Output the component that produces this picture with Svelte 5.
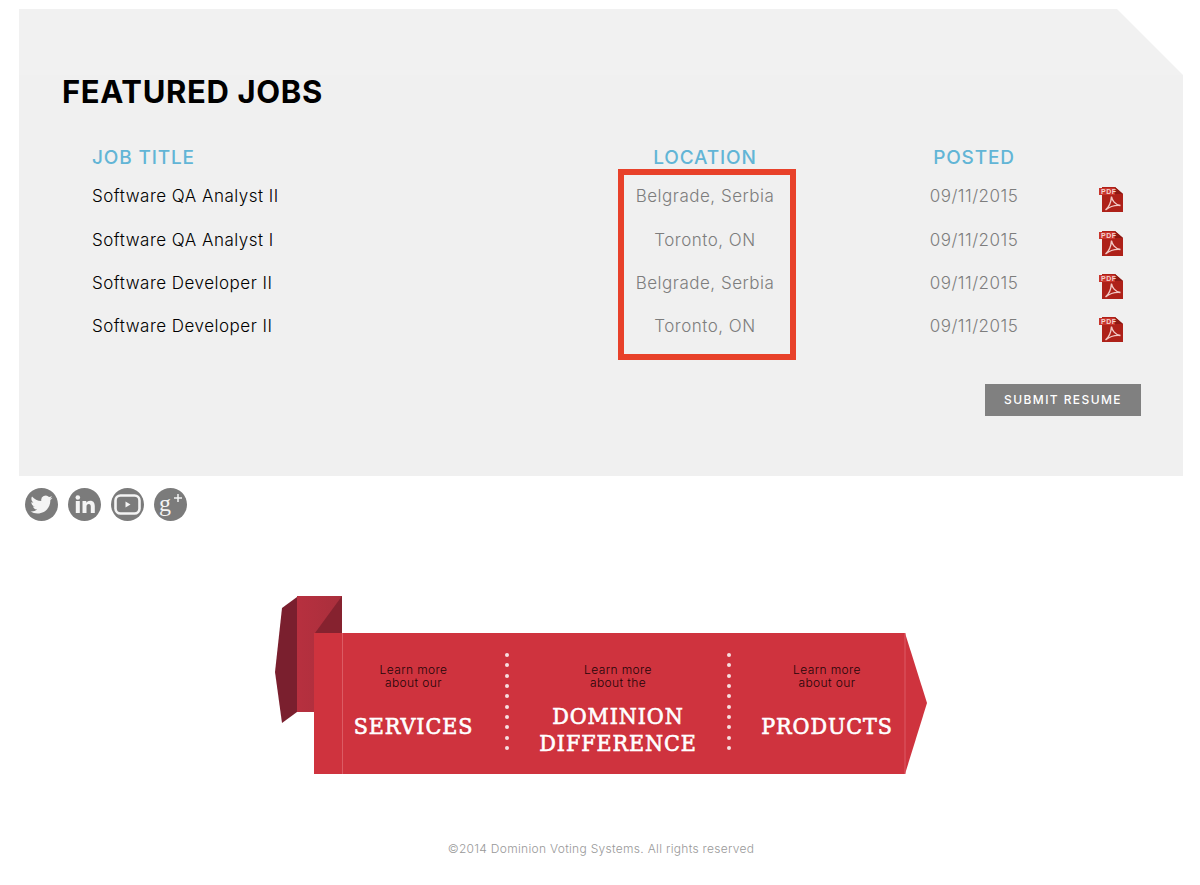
<script>
  const jobs = [
    { title: 'Software QA Analyst II', location: 'Belgrade, Serbia', posted: '09/11/2015' },
    { title: 'Software QA Analyst I', location: 'Toronto, ON', posted: '09/11/2015' },
    { title: 'Software Developer II', location: 'Belgrade, Serbia', posted: '09/11/2015' },
    { title: 'Software Developer II', location: 'Toronto, ON', posted: '09/11/2015' }
  ];
  const dots = Array(10);
</script>

<main class="page">
  <section class="panel">
    <h1>FEATURED JOBS</h1>
    <div class="jobs">
      <div class="head">JOB TITLE</div>
      <div class="head center">LOCATION</div>
      <div class="head center posted">POSTED</div>
      <div></div>
      {#each jobs as job}
        <div class="cell title">{job.title}</div>
        <div class="cell center muted">{job.location}</div>
        <div class="cell center muted posted">{job.posted}</div>
        <div class="cell pdf">
          <svg width="25" height="27" viewBox="0 0 25 27">
            <path d="M3 1h13l8 7v18H3z" fill="#ae2119" />
            <path d="M16 1l8 7h-8z" fill="#8c1a14" />
            <path d="M0 2h16v7H0z" fill="#c9352c" />
            <text x="2" y="8" class="pdf-label">PDF</text>
            <path d="M6.500 24c3-2.500 5.500-7 6-13.500 .5 3.500 3.500 8.500 9 9-4.500-.5-10 .5-15 4.500z" fill="none" stroke="#f2c9c5" stroke-width="1.400" />
          </svg>
        </div>
      {/each}
    </div>
    <div class="actions"><button>SUBMIT RESUME</button></div>
    <div class="highlight"></div>
  </section>

  <div class="social">
    <svg viewBox="0 0 33 33"><circle cx="16.500" cy="16.500" r="16.500" fill="#7b7b7b" /><path transform="translate(5.500 5.500) scale(.92)" fill="#f4f4f4" d="M23.953 4.570a10 10 0 01-2.825.775 4.958 4.958 0 002.163-2.723c-.951.555-2.005.959-3.127 1.184a4.920 4.920 0 00-8.384 4.482C7.690 8.095 4.067 6.130 1.640 3.162a4.822 4.822 0 00-.666 2.475c0 1.710.870 3.213 2.188 4.096a4.904 4.904 0 01-2.228-.616v.060a4.923 4.923 0 003.946 4.827 4.996 4.996 0 01-2.212.085 4.936 4.936 0 004.604 3.417 9.867 9.867 0 01-6.102 2.105c-.390 0-.779-.023-1.170-.067a13.995 13.995 0 007.557 2.209c9.053 0 13.998-7.496 13.998-13.985 0-.210 0-.420-.015-.630A9.935 9.935 0 0024 4.590z" /></svg>
    <svg viewBox="0 0 33 33"><circle cx="16.500" cy="16.500" r="16.500" fill="#7b7b7b" /><g fill="#f4f4f4"><circle cx="9.800" cy="9.500" r="2.300" /><rect x="7.800" y="13" width="4" height="12" /><path d="M14.500 13h3.800v1.800c.8-1.300 2.200-2.100 3.900-2.100 3.200 0 4.600 2.100 4.600 5.400V25h-4v-6.300c0-1.600-.6-2.700-2-2.700-1.500 0-2.300 1.100-2.300 2.700V25h-4z" /></g></svg>
    <svg viewBox="0 0 33 33"><circle cx="16.500" cy="16.500" r="16.500" fill="#7b7b7b" /><rect x="4.500" y="7.500" width="24" height="18" rx="5" fill="none" stroke="#f4f4f4" stroke-width="2.600" /><path d="M14.500 13.500l5 3-5 3z" fill="#f4f4f4" /></svg>
    <svg viewBox="0 0 33 33"><circle cx="16.500" cy="16.500" r="16.500" fill="#7b7b7b" /><text x="5" y="23" class="gplus">g</text><path d="M24 6v8M20 10h8" stroke="#f4f4f4" stroke-width="1.500" /></svg>
  </div>

  <nav class="banner">
    <svg class="ribbon" width="653" height="178" viewBox="0 0 653 178">
      <defs>
        <linearGradient id="fold" x1="0" x2="1" y1="0" y2="0">
          <stop offset="0" stop-color="#b7303f" />
          <stop offset="1" stop-color="#a92f3c" />
        </linearGradient>
      </defs>
      <path d="M7 12L22 1V116L7 127L0 76z" fill="#7a1f2e" />
      <path d="M22 0H67V37H39V116H22z" fill="url(#fold)" />
      <path d="M67 0V37H40z" fill="#86222f" />
      <path d="M39 37H630L652 107L630 178H39z" fill="#cf333e" />
      <path d="M67.500 37V178M630 37V178" stroke="#dc5b64" stroke-width="1" />
    </svg>
    <div class="item first">
      <p>Learn more<br />about our</p>
      <div class="name">SERVICES</div>
    </div>
    <div class="dots">{#each dots as _}<span></span>{/each}</div>
    <div class="item second">
      <p>Learn more<br />about the</p>
      <div class="name">DOMINION<br />DIFFERENCE</div>
    </div>
    <div class="dots">{#each dots as _}<span></span>{/each}</div>
    <div class="item third">
      <p>Learn more<br />about our</p>
      <div class="name">PRODUCTS</div>
    </div>
  </nav>

  <footer>©2014 Dominion Voting Systems. All rights reserved</footer>
</main>

<style>
  :global(body) {
    background: #fff;
  }

  .page {
    font-family: Inter, "Liberation Sans", sans-serif;
    padding-top: 9px;
    height: 876px;
    overflow: hidden;
  }

  .panel {
    position: relative;
    box-sizing: border-box;
    margin-left: 19px;
    width: 1164px;
    height: 467px;
    padding: 65px 0 0 43px;
    background: linear-gradient(#f1f1f1 66px, #f0f0f0 66px);
    clip-path: polygon(0 0, 1098px 0, 1164px 66px, 1164px 467px, 0 467px);
  }

  h1 {
    margin: 0;
    font-size: 31px;
    line-height: 36px;
    font-weight: 700;
    color: #000;
    letter-spacing: 0.65px;
  }

  .jobs {
    display: grid;
    grid-template-columns: 528px 170px 278px 56px;
    grid-auto-rows: 43.300px;
    margin: 29px 0 0 30px;
  }

  .head {
    height: 30px;
    font-size: 19px;
    line-height: 38px;
    font-weight: 500;
    letter-spacing: 0.85px;
    color: #62b5d6;
  }

  .center {
    text-align: center;
  }

  .posted {
    padding-left: 90px;
  }

  .cell {
    font-size: 17px;
    font-weight: 300;
    line-height: 30px;
    margin-top: -1px;
    letter-spacing: 0.5px;
  }

  .title {
    color: #000;
    letter-spacing: 0.5px;
  }

  .muted {
    color: #7d7d7d;
  }

  .pdf {
    padding-left: 31px;
    padding-top: 5px;
  }

  .pdf-label {
    font: 700 7px "Liberation Sans", sans-serif;
    fill: #f3d2ce;
  }

  .actions {
    display: flex;
    justify-content: flex-end;
    margin: 29px 42px 0 0;
  }

  button {
    width: 156px;
    height: 32px;
    padding: 0 0 2px;
    border: 0;
    background: #808080;
    color: #fff;
    font: 500 12px Inter, "Liberation Sans", sans-serif;
    letter-spacing: 1.400px;
  }

  .highlight {
    position: absolute;
    left: 599px;
    top: 160px;
    box-sizing: border-box;
    width: 178px;
    height: 191px;
    border: 6px solid #e8412a;
  }

  .social {
    display: flex;
    gap: 10px;
    margin: 12px 0 0 25px;
  }

  .social svg {
    width: 33px;
    height: 33px;
  }

  .gplus {
    font: 400 24px "Liberation Serif", serif;
    fill: #f4f4f4;
  }

  .banner {
    position: relative;
    display: flex;
    box-sizing: border-box;
    margin: 75px 0 0 275px;
    width: 653px;
    height: 178px;
    padding: 37px 0 0 47px;
  }

  .ribbon {
    position: absolute;
    left: 0;
    top: 0;
  }

  .item {
    position: relative;
    display: flex;
    flex-direction: column;
    box-sizing: border-box;
    height: 141px;
    padding: 30px 0 4px;
    text-align: center;
  }

  .first { width: 183px; padding-bottom: 11px; }
  .second { width: 218px; }
  .third { width: 192px; padding-bottom: 11px; }

  .item p {
    margin: 0;
    font-size: 12px;
    font-weight: 300;
    line-height: 13px;
    letter-spacing: 0.4px;
    color: #1d0508;
  }

  .name {
    flex: 1;
    display: flex;
    align-items: center;
    justify-content: center;
    font-family: "DejaVu Serif", serif;
    font-stretch: condensed;
    font-size: 23px;
    line-height: 27px;
    font-weight: 400;
    letter-spacing: 0.9px;
    -webkit-text-stroke: 0.6px #fff;
    color: #fff;
  }

  .dots {
    position: relative;
    display: flex;
    flex-direction: column;
    justify-content: space-between;
    width: 4px;
    height: 97px;
    margin-top: 20px;
  }

  .dots span {
    width: 4px;
    height: 4px;
    border-radius: 50%;
    background: #f6dfe0;
  }

  footer {
    margin-top: 67px;
    padding-left: 2px;
    text-align: center;
    font-size: 12px;
    font-weight: 300;
    line-height: 16px;
    letter-spacing: 0.3px;
    color: #999;
  }
</style>
